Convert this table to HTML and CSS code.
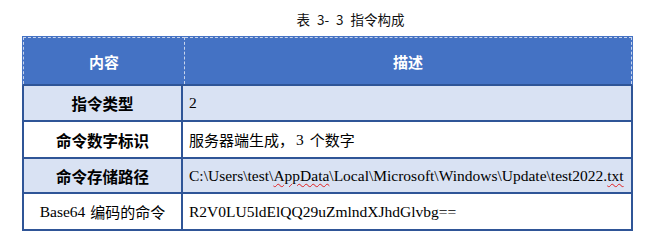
FILE: index.html
```html
<!DOCTYPE html>
<html lang="zh">
<head>
<meta charset="utf-8">
<link rel="stylesheet" href="styles.css">
</head>
<body>
<div class="page">
  <div class="caption">表<span class="sp"></span>3-<span class="sp"></span>3<span class="sp"></span>指令构成</div>
  <div class="table">
    <div class="thead">
      <div class="th th-first">内容</div>
      <div class="th th-second">描述</div>
    </div>
    <div class="tbody">
      <div class="tr tr-shade r1">
        <div class="td td-label bold">指令类型</div>
        <div class="td td-value latin">2</div>
      </div>
      <div class="tr r2">
        <div class="td td-label bold">命令数字标识</div>
        <div class="td td-value cjk">服务器端生成，<span class="latin num">3</span>个数字</div>
      </div>
      <div class="tr tr-shade r3">
        <div class="td td-label bold">命令存储路径</div>
        <div class="td td-value latin">C:\Users\test\<span class="squiggle">AppData</span>\Local\Microsoft\Windows\Update\test2022.<span class="squiggle">txt</span></div>
      </div>
      <div class="tr r4">
        <div class="td td-label"><span class="latin word">Base64</span><span class="cjk">编码的命令</span></div>
        <div class="td td-value latin">R2V0LU5ldElQQ29uZmlndXJhdGlvbg==</div>
      </div>
    </div>
  </div>
</div>
</body>
</html>
```

FILE: styles.css
```css
html, body {
  margin: 0;
  padding: 0;
  background: #ffffff;
}

.page {
  padding: 11px 0 0 22px;
  font-family: "Liberation Serif", "Noto Sans CJK SC", serif;
  color: #000;
}

.caption {
  width: 611px;
  padding-left: 46px;
  box-sizing: border-box;
  text-align: center;
  font-family: "Noto Sans CJK SC", sans-serif;
  font-size: 13.5px;
  line-height: 16px;
  height: 25px;
  color: #111;
}

.caption .sp {
  display: inline-block;
  width: 7px;
}

.table {
  width: 611px;
}

.thead {
  display: grid;
  grid-template-columns: 162px 447px;
  border: 1px solid #4472c4;
  border-bottom: 2px solid #2f5597;
  background: #4472c4;
}

.th {
  height: 45px;
  border-top: 1px dashed #c8d4ec;
  border-right: 1px dashed #c8d4ec;
  display: flex;
  align-items: center;
  justify-content: center;
  color: #ffffff;
  font-family: "Noto Sans CJK SC", sans-serif;
  font-weight: 700;
  font-size: 15px;
  padding-top: 1px;
}

.th-first {
  border-left: 1px dashed #c8d4ec;
}

.tbody {
  border-left: 2px solid #2f5597;
  border-right: 2px solid #2f5597;
}

.tr {
  display: grid;
  grid-template-columns: 159px 448px;
  border-bottom: 2px solid #2f5597;
}

.tr-shade {
  background: #d9e2f3;
}

.r1 { height: 34px; }
.r2 { height: 35px; }
.r3 { height: 33px; }
.r4 { height: 35px; }

.td {
  display: flex;
  align-items: center;
  font-size: 15.5px;
  white-space: nowrap;
}

.td-label {
  justify-content: center;
  border-right: 2px solid #2f5597;
}

.bold {
  font-family: "Noto Sans CJK SC", sans-serif;
  font-weight: 700;
  font-size: 15.5px;
}

.td-value {
  padding-left: 6px;
}

.cjk {
  font-family: "Noto Sans CJK SC", sans-serif;
  font-size: 15px;
}

.latin {
  font-family: "Liberation Serif", serif;
  font-size: 15.5px;
}

.num {
  margin: 0 6px 0 2px;
}

.word {
  margin-right: 5px;
}

.squiggle {
  text-decoration: underline wavy #e02020;
  text-decoration-thickness: 1px;
  text-underline-offset: 2px;
}
```
